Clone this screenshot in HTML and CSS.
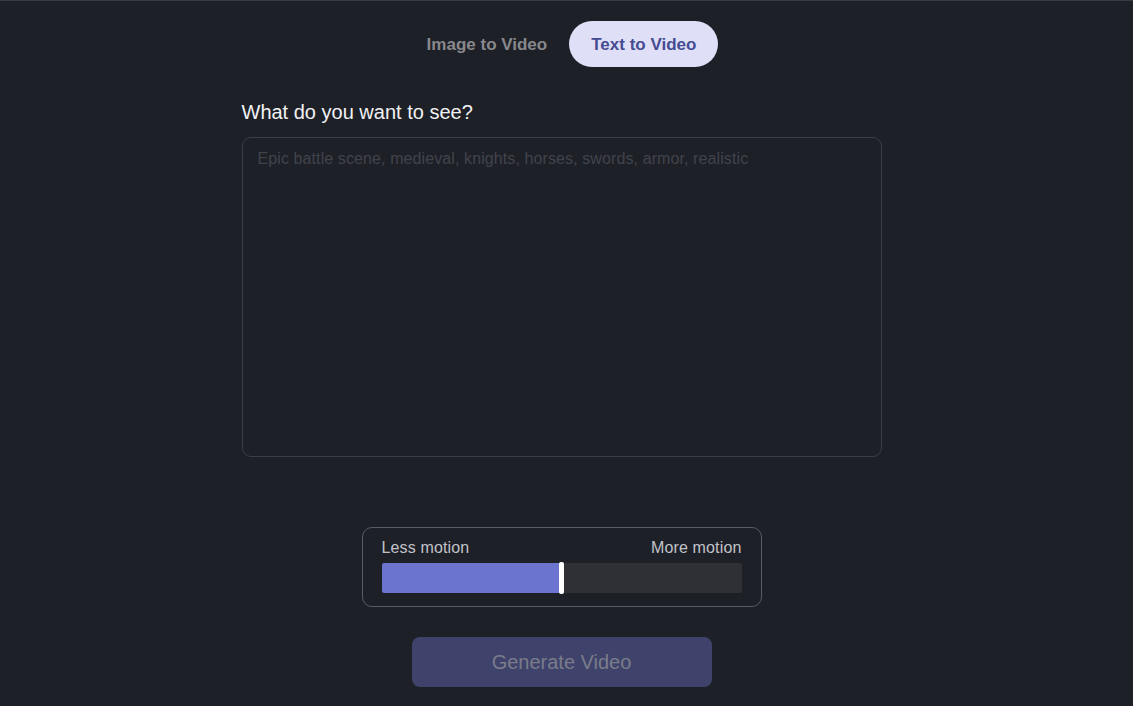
FILE: index.html
```html
<!DOCTYPE html>
<html>
<head>
<meta charset="utf-8">
<link rel="stylesheet" href="styles.css">
</head>
<body>
<div class="page">
  <div class="tabs">
    <button class="tab">Image to Video</button>
    <button class="tab active">Text to Video</button>
  </div>
  <div class="form">
    <label class="label">What do you want to see?</label>
    <textarea class="prompt" placeholder="Epic battle scene, medieval, knights, horses, swords, armor, realistic"></textarea>
  </div>
  <div class="motion">
    <div class="motion-labels"><span>Less motion</span><span>More motion</span></div>
    <div class="track">
      <div class="fill" style="width:50%"></div>
      <div class="thumb"></div>
    </div>
  </div>
  <button class="generate">Generate Video</button>
</div>
</body>
</html>
```
FILE: styles.css
```css
html, body {
  margin: 0;
  padding: 0;
  background: #1e2028;
  height: 100%;
  overflow: hidden;
}
body {
  font-family: "Liberation Sans", Arial, sans-serif;
  border-top: 1px solid #383a42;
  box-sizing: border-box;
}
.page {
  width: 1123px;
  display: flex;
  flex-direction: column;
  align-items: center;
}
.tabs {
  display: flex;
  margin-top: 20px;
}
.tab {
  font-family: inherit;
  font-size: 17px;
  font-weight: bold;
  height: 46px;
  padding: 2px 22px 0;
  border: none;
  border-radius: 23px;
  background: transparent;
  color: #88888c;
  cursor: pointer;
}
.tab.active {
  background: #dfe0f7;
  color: #464c92;
}
.form {
  width: 640px;
  margin-top: 34px;
  display: flex;
  flex-direction: column;
}
.label {
  font-size: 20px;
  color: #f2f2f4;
  line-height: 23px;
  margin-bottom: 13px;
}
.prompt {
  box-sizing: border-box;
  width: 640px;
  height: 320px;
  background: #1e2028;
  border: 1px solid #3c3e46;
  border-radius: 9px;
  padding: 12px 14px 12px 15px;
  font-family: inherit;
  font-size: 16px;
  letter-spacing: 0.1px;
  color: #e0e0e0;
  resize: none;
  outline: none;
}
.prompt::placeholder {
  color: #41434b;
}
.motion {
  box-sizing: border-box;
  width: 400px;
  margin-top: 70px;
  border: 1px solid #5a5c64;
  border-radius: 10px;
  padding: 11px 19px 13px;
}
.motion-labels {
  display: flex;
  justify-content: space-between;
  font-size: 16px;
  letter-spacing: 0.15px;
  color: #c2c3c9;
  line-height: 18px;
  margin-bottom: 6px;
}
.track {
  position: relative;
  height: 30px;
  background: #2f3036;
  border-radius: 2px;
}
.fill {
  height: 100%;
  background: #6b74cf;
  border-radius: 2px 0 0 2px;
}
.thumb {
  position: absolute;
  left: 177px;
  top: -1px;
  width: 5px;
  height: 32px;
  background: #ffffff;
  border-radius: 2px;
}
.generate {
  margin-top: 30px;
  width: 300px;
  height: 50px;
  border: none;
  border-radius: 8px;
  background: #3f436b;
  color: #7a7c8a;
  font-family: inherit;
  font-size: 20px;
}
```
